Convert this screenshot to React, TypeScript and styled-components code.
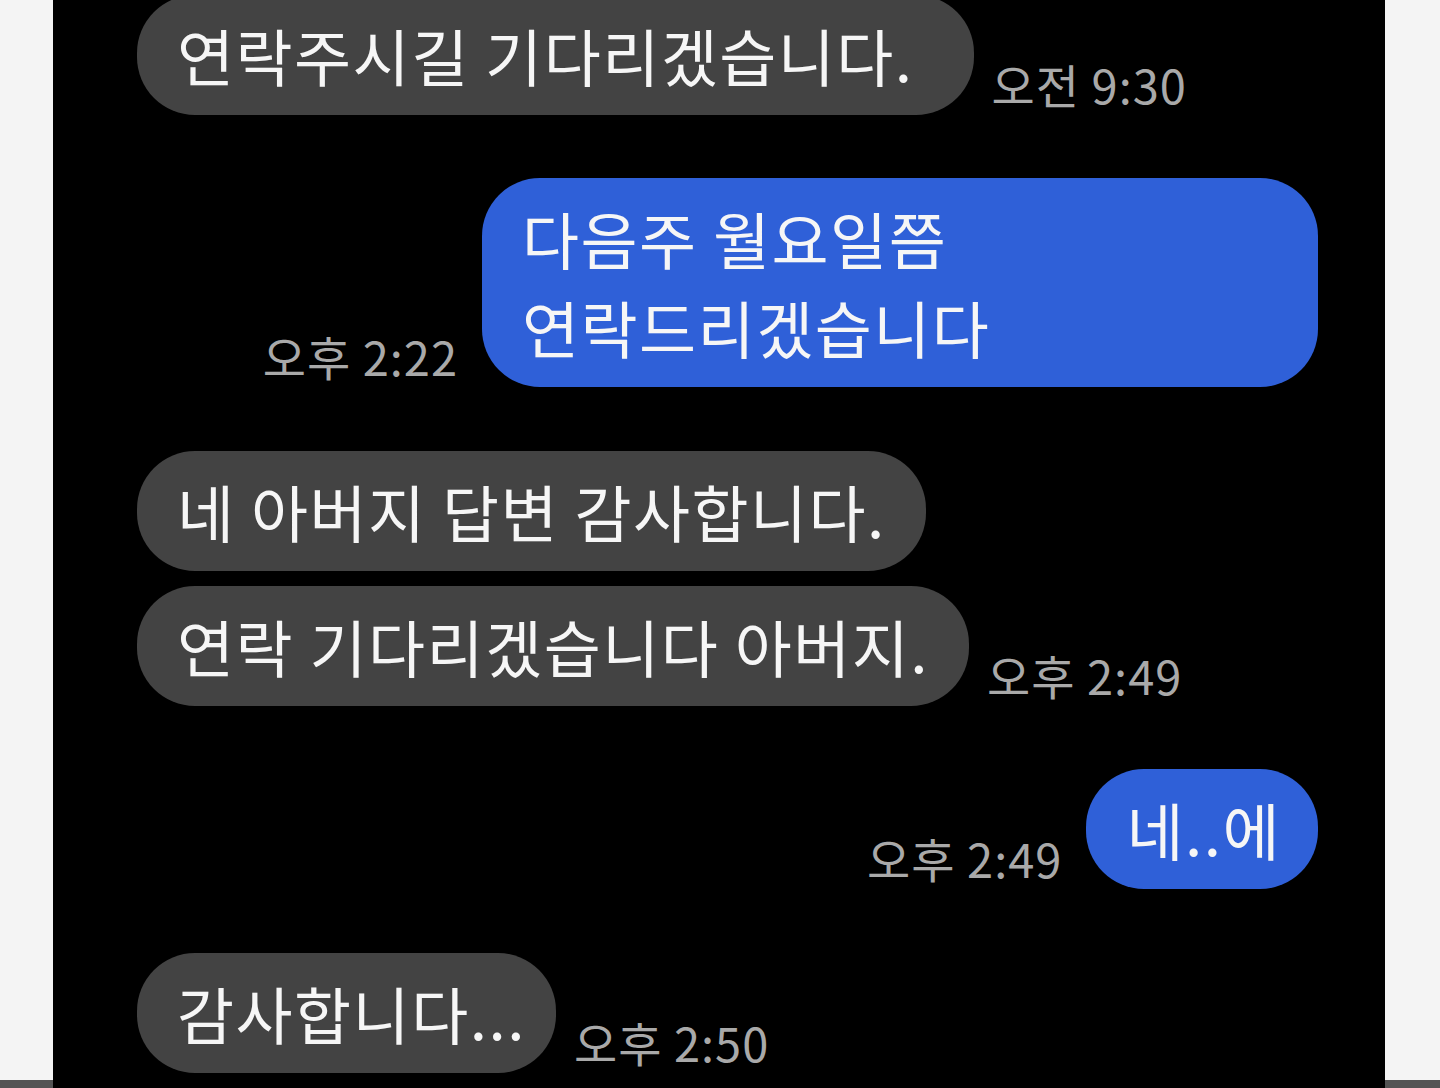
import React from "react";
import styled, { createGlobalStyle } from "styled-components";

const GlobalStyle = createGlobalStyle`
  html, body {
    margin: 0;
    padding: 0;
    background: #000;
  }
  body {
    font-family: "Noto Sans CJK KR", "Noto Sans", sans-serif;
  }
`;

const Page = styled.div`
  display: flex;
  width: 1440px;
  height: 1088px;
  overflow: hidden;
`;

const Side = styled.div<{ $width: number }>`
  width: ${(p) => p.$width}px;
  flex-shrink: 0;
  background: #f4f4f4;
  border-bottom: 8px solid #545454;
  box-sizing: border-box;
`;

const Chat = styled.div`
  flex: 1;
  background: #000;
  display: flex;
  flex-direction: column;
  padding: 0 67px 0 84px;
  overflow: hidden;
`;

const Row = styled.div<{ $mine?: boolean; $gap: number }>`
  display: flex;
  flex-direction: ${(p) => (p.$mine ? "row-reverse" : "row")};
  align-items: flex-end;
  gap: ${(p) => (p.$mine ? 24 : 18)}px;
  margin-top: ${(p) => p.$gap}px;
`;

const Bubble = styled.div<{ $mine?: boolean; $width?: number; $padRight?: number }>`
  background: ${(p) => (p.$mine ? "#2f60d8" : "#434343")};
  color: #f6f6f6;
  font-size: 62px;
  letter-spacing: 1.5px;
  line-height: 89px;
  padding: 16px ${(p) => p.$padRight ?? 40}px 15px 40px;
  border-radius: 58px;
  white-space: pre-line;
  box-sizing: border-box;
  ${(p) => (p.$width ? `width: ${p.$width}px;` : "")}
`;

const Time = styled.span`
  color: #a9a9a9;
  font-size: 47px;
  line-height: 1;
  letter-spacing: 1px;
  margin-bottom: 8px;
  white-space: nowrap;
`;

interface Message {
  text: string;
  mine?: boolean;
  time?: string;
  gap: number;
  width?: number;
  padRight?: number;
}

const messages: Message[] = [
  { text: "연락주시길 기다리겠습니다.", time: "오전 9:30", gap: -5, padRight: 60 },
  { text: "다음주 월요일쯤\n연락드리겠습니다", mine: true, time: "오후 2:22", gap: 63, width: 836 },
  { text: "네 아버지 답변 감사합니다.", gap: 64 },
  { text: "연락 기다리겠습니다 아버지.", time: "오후 2:49", gap: 15 },
  { text: "네..에", mine: true, time: "오후 2:49", gap: 63, padRight: 37 },
  { text: "감사합니다...", time: "오후 2:50", gap: 64, padRight: 30 },
];

export default function App() {
  return (
    <>
      <GlobalStyle />
      <Page>
        <Side $width={53} />
        <Chat>
          {messages.map((m, i) => (
            <Row key={i} $mine={m.mine} $gap={m.gap}>
              <Bubble $mine={m.mine} $width={m.width} $padRight={m.padRight}>
                {m.text}
              </Bubble>
              {m.time && <Time>{m.time}</Time>}
            </Row>
          ))}
        </Chat>
        <Side $width={55} />
      </Page>
    </>
  );
}
